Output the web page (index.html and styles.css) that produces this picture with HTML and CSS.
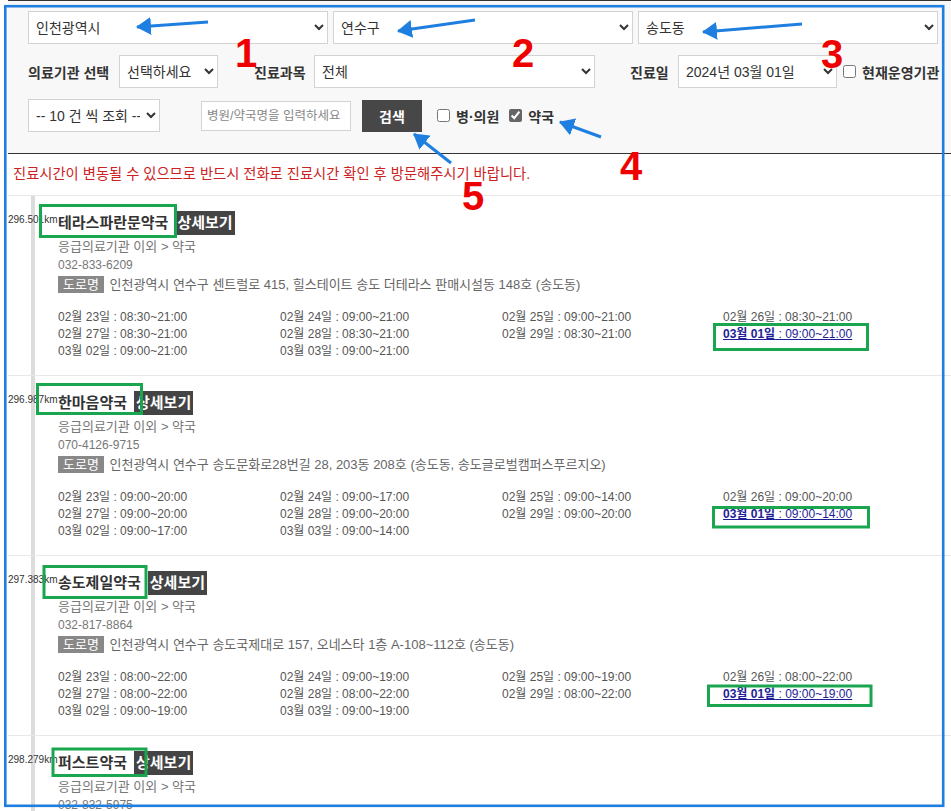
FILE: index.html
```html
<!DOCTYPE html>
<html lang="ko">
<head>
  <meta charset="UTF-8" />
  <meta name="viewport" content="width=device-width, initial-scale=1.0"/>
  <title>약국 찾기</title>
  <link rel="stylesheet" href="styles.css">
</head>
<body>

  <div class="wrap">
    <!-- 검색 조건 -->
    <form class="search-box">
      <div class="row">
        <select class="sel-area"><option>인천광역시</option></select>
        <select class="sel-area"><option>연수구</option></select>
        <select class="sel-area"><option>송도동</option></select>
      </div>
      <div class="row">
        <label class="lbl lbl-kind">의료기관 선택</label>
        <select class="sel-type"><option>선택하세요</option></select>
        <label class="lbl lbl-dept">진료과목</label>
        <select class="sel-dept"><option>전체</option></select>
        <label class="lbl lbl-date">진료일</label>
        <select class="sel-date"><option>2024년 03월 01일</option></select>
        <label class="chk chk-now"><input type="checkbox">현재운영기관</label>
      </div>
      <div class="row">
        <select class="sel-cnt"><option>-- 10 건 씩 조회 --</option></select>
        <input class="kw" type="text" placeholder="병원/약국명을 입력하세요">
        <button class="btn" type="button">검색</button>
        <label class="chk chk-hosp"><input type="checkbox">병·의원</label>
        <label class="chk chk-pharm"><input type="checkbox" checked>약국</label>
      </div>
    </form>

    <p class="notice">진료시간이 변동될 수 있으므로 반드시 전화로 진료시간 확인 후 방문해주시기 바랍니다.</p>

    <!-- 결과 목록 -->
    <ul class="list">
      <li class="item">
        <div class="item-head">
          <span class="dist">296.501km</span>
          <strong class="name">테라스파란문약국</strong>
          <a class="more" href="#">상세보기</a>
        </div>
        <p class="cate">응급의료기관 이외 &gt; 약국</p>
        <p class="tel">032-833-6209</p>
        <p class="addr"><span class="road">도로명</span> 인천광역시 연수구 센트럴로 415, 힐스테이트 송도 더테라스 판매시설동 148호 (송도동)</p>
        <ul class="times">
          <li>02월 23일 : 08:30~21:00</li>
          <li>02월 24일 : 09:00~21:00</li>
          <li>02월 25일 : 09:00~21:00</li>
          <li>02월 26일 : 08:30~21:00</li>
          <li>02월 27일 : 08:30~21:00</li>
          <li>02월 28일 : 08:30~21:00</li>
          <li>02월 29일 : 08:30~21:00</li>
          <li class="today"><a href="#"><b>03월 01일</b> : 09:00~21:00</a></li>
          <li>03월 02일 : 09:00~21:00</li>
          <li>03월 03일 : 09:00~21:00</li>
        </ul>
      </li>
      <li class="item">
        <div class="item-head">
          <span class="dist">296.987km</span>
          <strong class="name">한마음약국</strong>
          <a class="more" href="#">상세보기</a>
        </div>
        <p class="cate">응급의료기관 이외 &gt; 약국</p>
        <p class="tel">070-4126-9715</p>
        <p class="addr"><span class="road">도로명</span> 인천광역시 연수구 송도문화로28번길 28, 203동 208호 (송도동, 송도글로벌캠퍼스푸르지오)</p>
        <ul class="times">
          <li>02월 23일 : 09:00~20:00</li>
          <li>02월 24일 : 09:00~17:00</li>
          <li>02월 25일 : 09:00~14:00</li>
          <li>02월 26일 : 09:00~20:00</li>
          <li>02월 27일 : 09:00~20:00</li>
          <li>02월 28일 : 09:00~20:00</li>
          <li>02월 29일 : 09:00~20:00</li>
          <li class="today"><a href="#"><b>03월 01일</b> : 09:00~14:00</a></li>
          <li>03월 02일 : 09:00~17:00</li>
          <li>03월 03일 : 09:00~14:00</li>
        </ul>
      </li>
      <li class="item">
        <div class="item-head">
          <span class="dist">297.383km</span>
          <strong class="name">송도제일약국</strong>
          <a class="more" href="#">상세보기</a>
        </div>
        <p class="cate">응급의료기관 이외 &gt; 약국</p>
        <p class="tel">032-817-8864</p>
        <p class="addr"><span class="road">도로명</span> 인천광역시 연수구 송도국제대로 157, 오네스타 1층 A-108~112호 (송도동)</p>
        <ul class="times">
          <li>02월 23일 : 08:00~22:00</li>
          <li>02월 24일 : 09:00~19:00</li>
          <li>02월 25일 : 09:00~19:00</li>
          <li>02월 26일 : 08:00~22:00</li>
          <li>02월 27일 : 08:00~22:00</li>
          <li>02월 28일 : 08:00~22:00</li>
          <li>02월 29일 : 08:00~22:00</li>
          <li class="today"><a href="#"><b>03월 01일</b> : 09:00~19:00</a></li>
          <li>03월 02일 : 09:00~19:00</li>
          <li>03월 03일 : 09:00~19:00</li>
        </ul>
      </li>
      <li class="item">
        <div class="item-head">
          <span class="dist">298.279km</span>
          <strong class="name">퍼스트약국</strong>
          <a class="more" href="#">상세보기</a>
        </div>
        <p class="cate">응급의료기관 이외 &gt; 약국</p>
        <p class="tel">032-832-5975</p>
      </li>
    </ul>
  </div>

  <!-- 캡처 위 표시(화살표, 번호, 박스) -->
  <svg class="annot" width="951" height="811" viewBox="0 0 951 811">
    <defs>
      <marker id="head" markerUnits="userSpaceOnUse" markerWidth="15" markerHeight="18" refX="14" refY="9" orient="auto">
        <path d="M0,0 L15,9 L0,18 Z" fill="#1f7fe0"/>
      </marker>
    </defs>
    <rect x="5.3" y="6.2" width="937.9" height="799.6" fill="none" stroke="#1f7fe0" stroke-width="2.6"/>
    <g stroke="#1f7fe0" stroke-width="3" marker-end="url(#head)">
      <line x1="208" y1="22" x2="137" y2="27"/>
      <line x1="475" y1="20" x2="398" y2="31"/>
      <line x1="802" y1="24" x2="703" y2="32"/>
      <line x1="601" y1="137" x2="560" y2="122"/>
      <line x1="451" y1="163" x2="414" y2="134"/>
    </g>
    <g class="num">
      <text x="246" y="67">1</text>
      <text x="523" y="67">2</text>
      <text x="832" y="68">3</text>
      <text x="631" y="180">4</text>
      <text x="473" y="210">5</text>
    </g>
    <g fill="none" stroke="#1aa64e" stroke-width="3">
      <rect x="40.5" y="205.5" width="135" height="31"/>
      <rect x="37.5" y="384.5" width="104" height="29"/>
      <rect x="44" y="566.5" width="102" height="31"/>
      <rect x="53" y="749" width="93" height="26.5"/>
      <rect x="714.5" y="324.5" width="153" height="25"/>
      <rect x="713.5" y="507.5" width="155" height="19.5"/>
      <rect x="708.5" y="686" width="162.5" height="19.5"/>
    </g>
  </svg>

</body>
</html>
```

FILE: styles.css
```css
* {
  margin: 0;
  padding: 0;
  box-sizing: border-box;
}

body {
  font-family: "Liberation Sans", "Noto Sans CJK KR", sans-serif;
  color: #333;
  background: #fff;
  position: relative;
  overflow: hidden;
}

.wrap {
  margin-left: 8px;
}

/* 검색 조건 */
.search-box {
  background: #f8f8f8;
  border-top: 1px solid #333;
  border-bottom: 1px solid #333;
  padding: 10px 0 21px 20px;
}

.row {
  display: flex;
  align-items: center;
  height: 33px;
}

.row + .row {
  margin-top: 11px;
}

select,
.kw,
.btn {
  font-family: inherit;
}

select {
  height: 33px;
  border: 1px solid #d3d3d3;
  background: #fff;
  color: #333;
  font-size: 14px;
  padding: 0 3px;
}

.sel-area {
  width: 300px;
  margin-right: 5px;
}

.lbl {
  font-size: 14px;
  font-weight: bold;
  color: #333;
  white-space: nowrap;
}

.lbl-kind { width: 91px; }

.lbl-dept {
  width: 60px;
  margin-left: 36px;
}

.lbl-date {
  width: 48px;
  margin-left: 35px;
}

.sel-type { width: 99px; }
.sel-dept { width: 281px; }
.sel-date { width: 159px; }
.sel-cnt { width: 132px; }

.kw {
  width: 150px;
  height: 30px;
  margin-left: 41px;
  border: 1px solid #d3d3d3;
  background: #fff;
  font-size: 12.5px;
  padding: 0 5px;
}

.kw::placeholder {
  color: #888;
}

.btn {
  width: 60px;
  height: 32px;
  margin-left: 11px;
  border: none;
  background: #474747;
  color: #fff;
  font-size: 14px;
  font-weight: bold;
}

.chk {
  display: flex;
  align-items: center;
  font-size: 14px;
  font-weight: bold;
  color: #333;
  white-space: nowrap;
}

.chk input {
  width: 13px;
  height: 13px;
  margin: 0 6px 0 0;
  accent-color: #666;
}

.chk-now { margin-left: 6px; }
.chk-hosp { margin-left: 15px; }
.chk-pharm { margin-left: 10px; }

.notice {
  color: #cc2222;
  font-size: 14.3px;
  line-height: 17px;
  padding: 12px 5px;
}

/* 결과 목록 */
.list {
  list-style: none;
  border-top: 1px solid #e8e8e8;
  background: linear-gradient(#dcdcdc, #dcdcdc) no-repeat 23px 0 / 4px 100%;
}

.item {
  border-bottom: 1px solid #e8e8e8;
  padding: 15px 0 15px 50px;
}

.item-head {
  display: flex;
  align-items: flex-start;
  height: 24px;
  margin-left: -50px;
}

.dist {
  width: 50px;
  font-size: 10px;
  line-height: 18px;
  white-space: nowrap;
  color: #333;
}

.name {
  font-size: 15px;
  line-height: 24px;
  color: #333;
}

.more {
  margin-left: 7px;
  padding: 0 2px;
  background: #444;
  color: #fff;
  font-size: 15px;
  font-weight: bold;
  line-height: 24px;
  text-decoration: none;
}

.cate,
.tel {
  font-size: 13px;
  line-height: 18px;
  color: #777;
}

.tel {
  font-size: 12px;
}

.cate {
  margin-top: 3px;
}

.addr {
  margin-top: 2px;
  font-size: 13px;
  line-height: 17px;
  color: #666;
  white-space: nowrap;
}

.road {
  display: inline-block;
  padding: 0 5px;
  margin-right: 2px;
  background: #888;
  color: #fff;
}

.times {
  list-style: none;
  display: grid;
  grid-template-columns: 222px 222px 221px 221px;
  margin-top: 16px;
  font-size: 12px;
  line-height: 17px;
  color: #555;
}

.today a {
  color: #1e1e96;
  text-decoration: underline;
}

/* 캡처 표시 */
.annot {
  position: absolute;
  top: 0;
  left: 0;
  pointer-events: none;
}

.num text {
  font-family: "Liberation Sans", sans-serif;
  font-size: 40px;
  font-weight: bold;
  fill: #ee0000;
  text-anchor: middle;
}
```
